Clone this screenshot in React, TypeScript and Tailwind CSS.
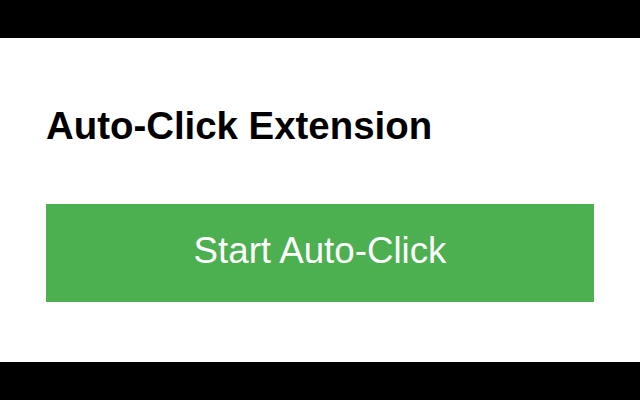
import React from 'react';

const App: React.FC = () => {
  return (
    <div className="flex h-[400px] w-[640px] flex-col bg-black" style={{ fontFamily: '"Liberation Sans", Arial, sans-serif' }}>
      <div className="h-[38px] shrink-0" />
      <div className="flex h-[324px] shrink-0 flex-col bg-white px-[46px] pt-[69px]">
        <h2 className="text-[38.4px] font-bold leading-none text-black">Auto-Click Extension</h2>
        <button className="mt-[59px] flex h-[98px] w-[548px] items-center justify-center bg-[#4caf50] pb-[5px] text-[36.7px] text-white">
          Start Auto-Click
        </button>
      </div>
      <div className="flex-1" />
    </div>
  );
};

export default App;
